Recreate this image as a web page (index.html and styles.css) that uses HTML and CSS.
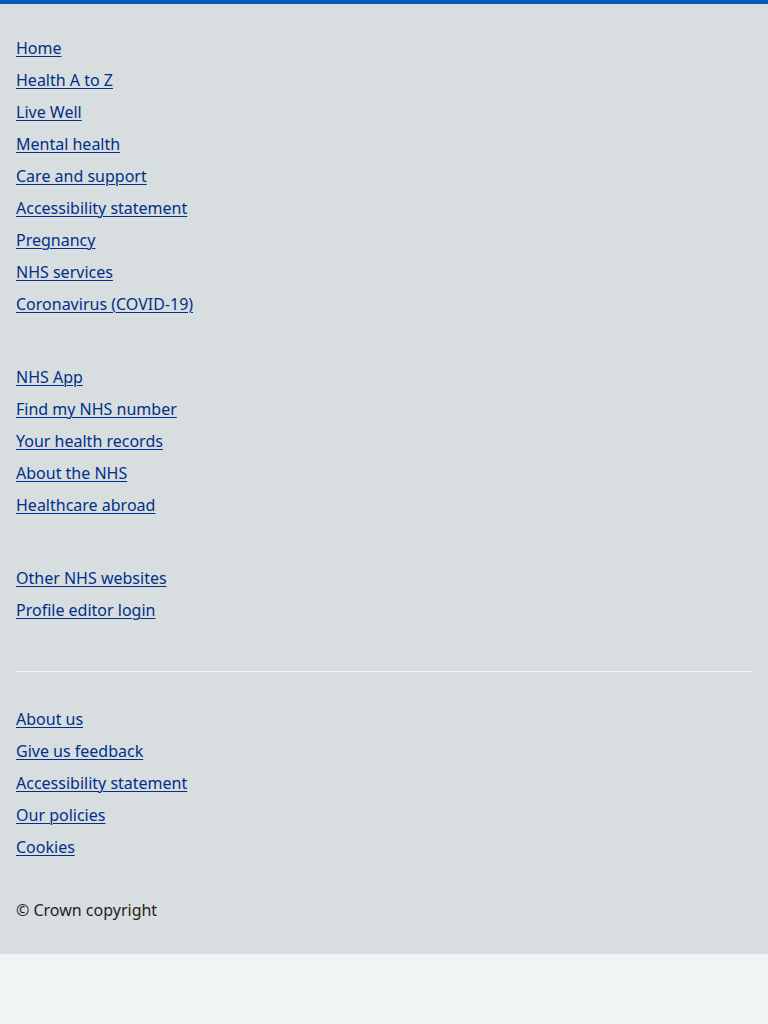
FILE: index.html
```html
<!DOCTYPE html>
<html lang="en">
<head>
<meta charset="utf-8">
<title>NHS footer</title>
<link rel="stylesheet" href="styles.css">
</head>
<body>
<footer class="footer">
  <div class="container">
    <ul class="list">
      <li><a href="#">Home</a></li>
      <li><a href="#">Health A to Z</a></li>
      <li><a href="#">Live Well</a></li>
      <li><a href="#">Mental health</a></li>
      <li><a href="#">Care and support</a></li>
      <li><a href="#">Accessibility statement</a></li>
      <li><a href="#">Pregnancy</a></li>
      <li><a href="#">NHS services</a></li>
      <li><a href="#">Coronavirus (COVID-19)</a></li>
    </ul>
    <ul class="list">
      <li><a href="#">NHS App</a></li>
      <li><a href="#">Find my NHS number</a></li>
      <li><a href="#">Your health records</a></li>
      <li><a href="#">About the NHS</a></li>
      <li><a href="#">Healthcare abroad</a></li>
    </ul>
    <ul class="list">
      <li><a href="#">Other NHS websites</a></li>
      <li><a href="#">Profile editor login</a></li>
    </ul>
    <hr class="divider">
    <ul class="list list-meta">
      <li><a href="#">About us</a></li>
      <li><a href="#">Give us feedback</a></li>
      <li><a href="#">Accessibility statement</a></li>
      <li><a href="#">Our policies</a></li>
      <li><a href="#">Cookies</a></li>
    </ul>
    <p class="copyright">&copy; Crown copyright</p>
  </div>
</footer>
</body>
</html>
```

FILE: styles.css
```css
html, body {
  margin: 0;
  padding: 0;
}
body {
  background: #f0f4f5;
  font-family: "Noto Sans", "Open Sans", sans-serif;
  color: #212b32;
  font-size: 16px;
  line-height: 24px;
}
.footer {
  background: #d8dde0;
  border-top: 4px solid #005eb8;
}
.container {
  padding: 32px 16px 32px;
}
.list {
  list-style: none;
  margin: 0 0 49px;
  padding: 0;
  display: flex;
  flex-direction: column;
  align-items: flex-start;
  gap: 8px;
}
.list a {
  color: #003087;
  text-decoration: underline;
  text-decoration-thickness: 1px;
  text-underline-offset: 2px;
}
.divider {
  border: 0;
  border-top: 1px solid #f0f4f5;
  margin: 0 0 35px;
  padding: 0;
}
.list-meta {
  margin-bottom: 39px;
}
.copyright {
  margin: 0;
  color: #231f20;
}
```
